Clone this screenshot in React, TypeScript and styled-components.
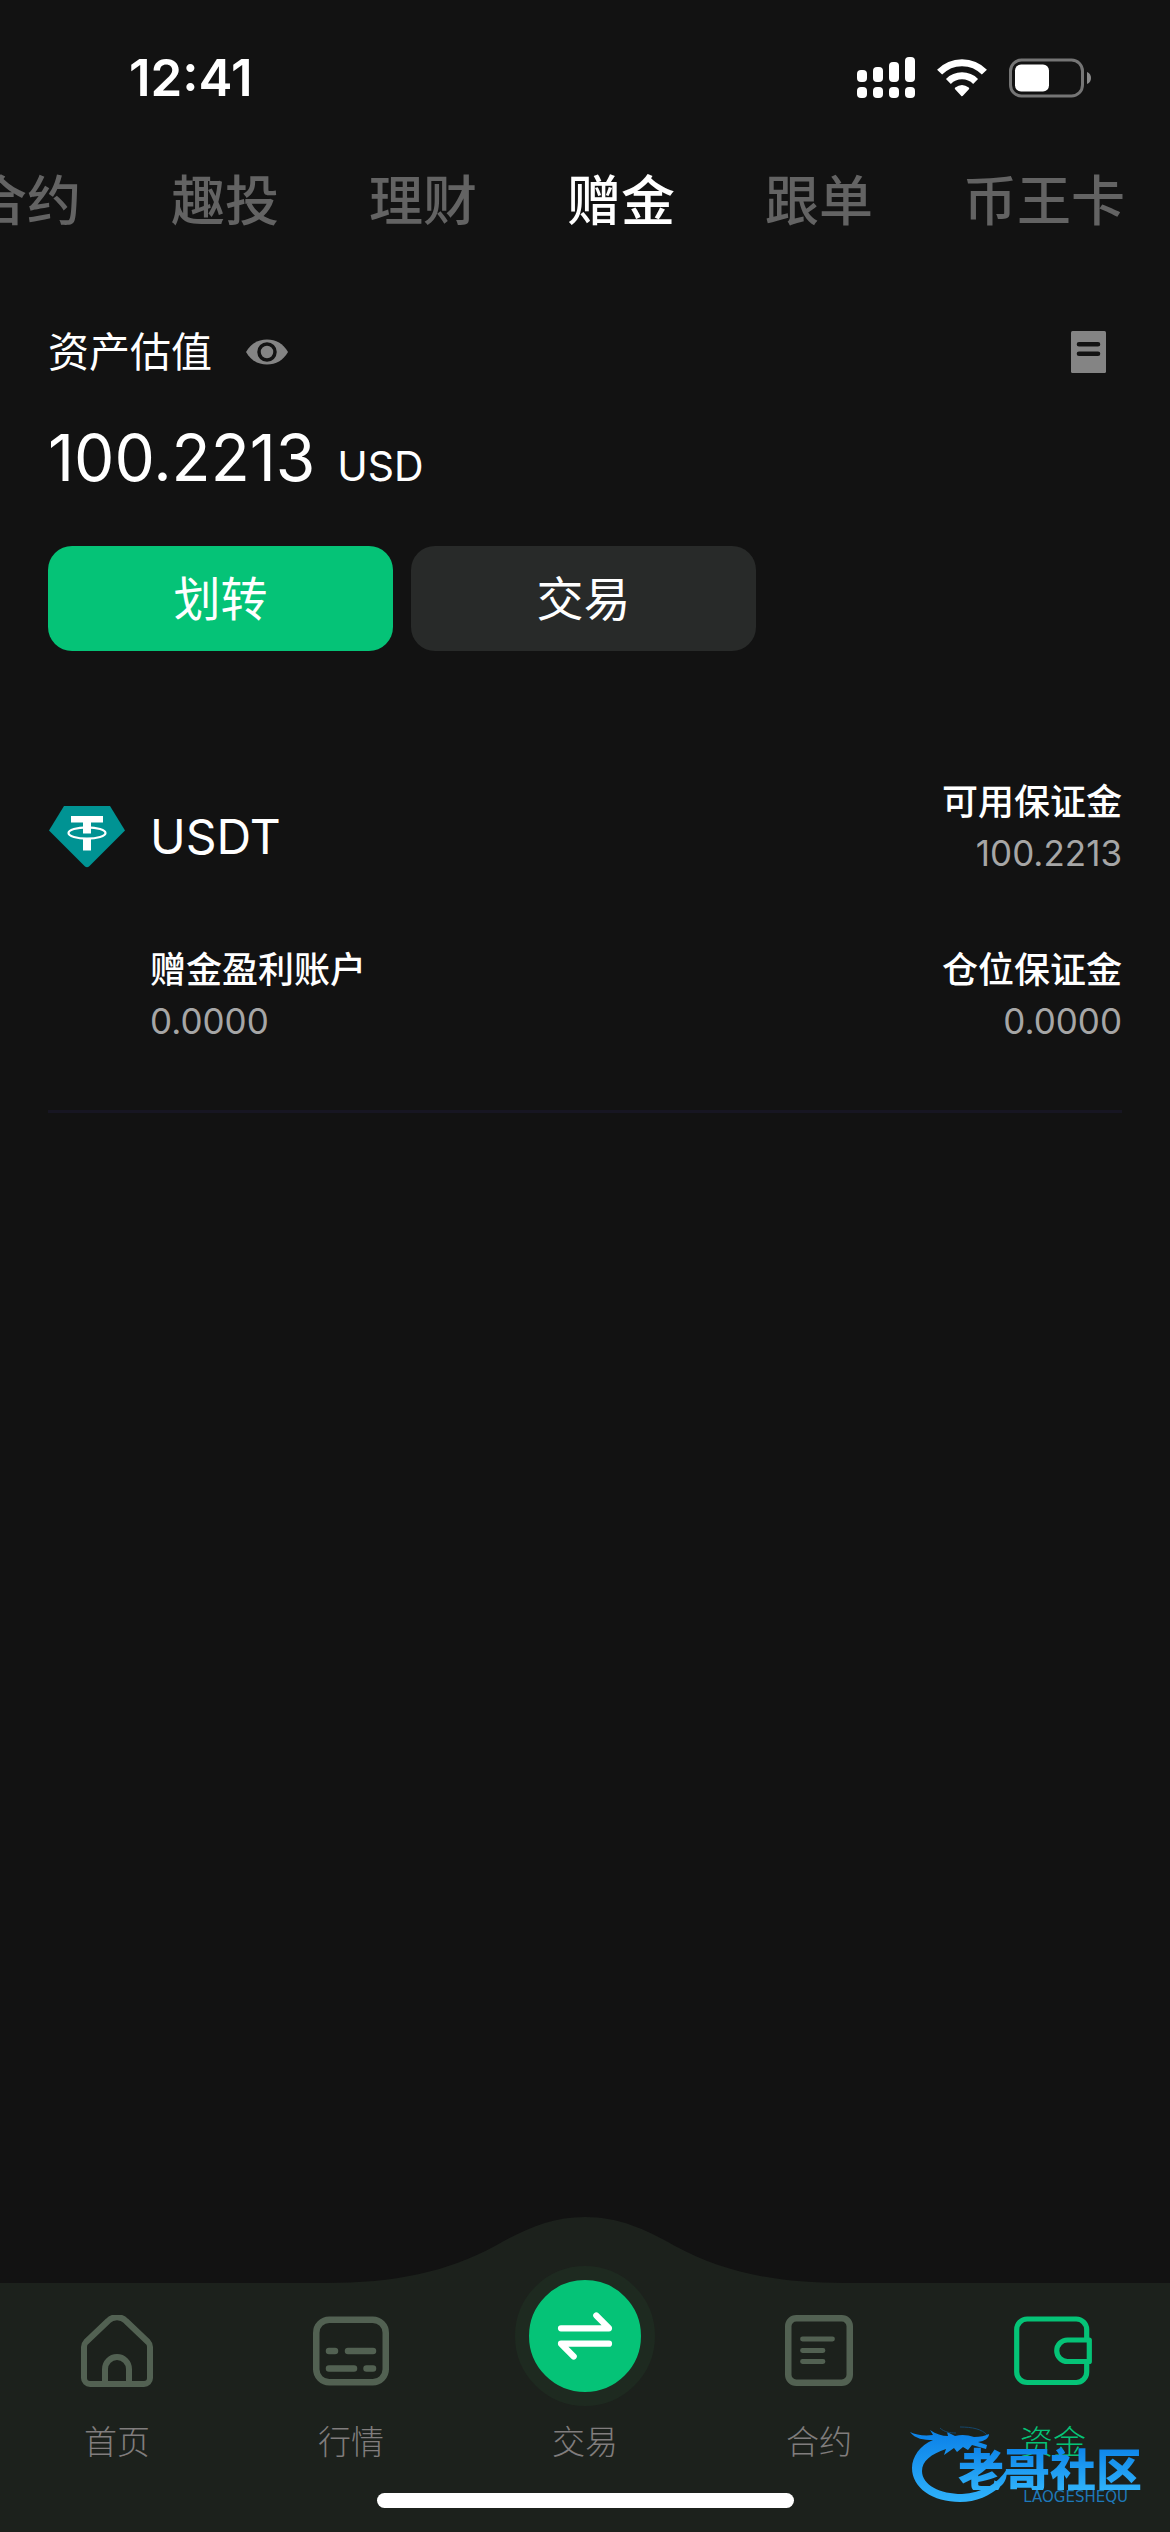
import React, { useState } from "react";
import styled, { createGlobalStyle } from "styled-components";

const color = {
  page: "#121212",
  bar: "#1c211c",
  halo: "#1e2a20",
  green: "#05c377",
  tile: "#282a29",
  text: "#ffffff",
  tab: "#636363",
  value: "#a6a6a6",
  icon: "#848484",
  navIcon: "#526152",
  navText: "#807d7d",
  line: "#171622",
};

const GlobalStyle = createGlobalStyle`
  * { box-sizing: border-box; }
  body {
    margin: 0;
    background: ${color.page};
    color: ${color.text};
    font-family: Inter, "Noto Sans CJK SC", sans-serif;
  }
  button { font-family: inherit; border: 0; padding: 0; background: none; color: inherit; cursor: pointer; }
  svg { display: block; }
`;

const Screen = styled.div`
  position: relative;
  display: flex;
  flex-direction: column;
  min-height: 100vh;
  overflow: hidden;
`;

const StatusBar = styled.header`
  display: flex;
  align-items: center;
  justify-content: space-between;
  height: 141px;
  padding: 15px 78px 0 129px;
`;

const Clock = styled.time`
  font-size: 51px;
  line-height: 60px;
  font-weight: 600;
`;

const StatusIcons = styled.div`
  display: flex;
  align-items: center;
  gap: 22px;
`;

const Tabs = styled.nav`
  display: flex;
  justify-content: flex-end;
  gap: 90px;
  padding: 21px 45px 20px;
  overflow: hidden;
`;

const Tab = styled.button<{ $active?: boolean }>`
  flex: none;
  font-size: 54px;
  line-height: 80px;
  font-weight: 500;
  color: ${(p) => (p.$active ? color.text : color.tab)};
`;

const Content = styled.main`
  flex: 1;
  padding: 0 48px;
`;

const Summary = styled.section`
  padding-top: 60px;
`;

const SummaryHead = styled.div`
  display: flex;
  align-items: center;
  justify-content: space-between;
  padding-right: 16px;
`;

const Caption = styled.div`
  display: flex;
  align-items: center;
  gap: 34px;
`;

const Title = styled.h1`
  margin: 0;
  font-size: 41px;
  line-height: 60px;
  font-weight: 400;
`;

const Total = styled.p`
  display: flex;
  align-items: baseline;
  gap: 22px;
  margin: 36px 0 0;
  font-size: 64px;
  line-height: 80px;
`;

const Unit = styled.span`
  font-size: 41px;
`;

const Actions = styled.div`
  display: flex;
  gap: 18px;
  margin-top: 40px;
`;

const Action = styled.button<{ $primary?: boolean }>`
  width: 345px;
  height: 105px;
  border-radius: 24px;
  font-size: 47px;
  line-height: 60px;
  color: ${color.text};
  background: ${(p) => (p.$primary ? color.green : color.tile)};
`;

const Asset = styled.section`
  display: grid;
  grid-template-columns: 78px 1fr auto;
  column-gap: 24px;
  row-gap: 66px;
  align-items: center;
  margin-top: 126px;
  padding-bottom: 63px;
  border-bottom: 3px solid ${color.line};
`;

const Coin = styled.h2`
  margin: 0;
  padding-top: 18px;
  font-size: 48px;
  line-height: 60px;
  font-weight: 400;
`;

const CoinIcon = styled.div`
  padding-top: 18px;
`;

const Figure = styled.dl<{ $end?: boolean }>`
  margin: 0;
  grid-column: ${(p) => (p.$end ? "3" : "2")};
  text-align: ${(p) => (p.$end ? "right" : "left")};
  font-size: 36px;
  line-height: 51px;
`;

const Label = styled.dt`
  font-weight: 500;
`;

const Value = styled.dd`
  margin: 0;
  font-size: 35px;
  color: ${color.value};
`;

const Dock = styled.footer`
  position: relative;
  padding: 29px 0 24px;
  background: ${color.bar};
`;

const Bump = styled.svg`
  position: absolute;
  left: 50%;
  bottom: 100%;
  margin-left: -260px;
`;

const DockItems = styled.nav`
  position: relative;
  display: flex;
  align-items: flex-end;
`;

const DockItem = styled.button<{ $active?: boolean }>`
  flex: 1;
  display: flex;
  flex-direction: column;
  align-items: center;
  font-size: 33px;
  line-height: 42px;
  font-weight: 300;
  color: ${(p) => (p.$active ? color.green : color.navText)};
`;

const DockIcon = styled.span<{ $active?: boolean }>`
  display: grid;
  place-items: center;
  width: 78px;
  height: 78px;
  margin-bottom: 31px;
  color: ${(p) => (p.$active ? color.green : color.navIcon)};
`;

const Swap = styled.span`
  display: grid;
  place-items: center;
  width: 140px;
  height: 140px;
  margin: -46px 0 15px;
  border: 14px solid ${color.halo};
  border-radius: 50%;
  background: ${color.green};
`;

const HomeIndicator = styled.div`
  width: 417px;
  height: 15px;
  margin: 30px auto 0;
  border-radius: 8px;
  background: #fff;
`;

const Watermark = styled.aside`
  position: absolute;
  right: 28px;
  bottom: 28px;
  display: flex;
  align-items: flex-start;
  pointer-events: none;
`;

const WatermarkText = styled.div`
  display: flex;
  flex-direction: column;
  align-items: flex-end;
  margin-left: -50px;
  padding-top: 18px;
`;

const WatermarkName = styled.strong`
  font-family: "Noto Sans CJK SC", sans-serif;
  font-size: 46px;
  line-height: 46px;
  font-weight: 900;
  background: linear-gradient(#0a80e8, #2fb2fa);
  background-clip: text;
  -webkit-background-clip: text;
  color: transparent;
`;

const WatermarkLatin = styled.small`
  padding-right: 14px;
  font-family: "DejaVu Sans", sans-serif;
  font-size: 15px;
  line-height: 14px;
  color: #1e78b8;
`;

const SignalIcon = () => (
  <svg width="58" height="42" viewBox="0 0 58 42" fill="#fff">
    <rect x="0" y="13" width="10" height="12" rx="4" />
    <rect x="16" y="10" width="10" height="15" rx="4" />
    <rect x="32" y="5" width="10" height="20" rx="4" />
    <rect x="48" y="0" width="10" height="25" rx="4" />
    {[0, 16, 32, 48].map((x) => (
      <rect key={x} x={x} y="30" width="10" height="11" rx="4" />
    ))}
  </svg>
);

const WifiIcon = () => (
  <svg width="50" height="38" viewBox="0 0 50 38" fill="none" stroke="#fff" strokeWidth="7">
    <path d="M2.6 13.2A31 31 0 0 1 47.4 13.2" />
    <path d="M11.4 22.4A19.5 19.5 0 0 1 38.6 22.4" />
    <path d="M25 36 19 29.5Q25 25 31 29.5Z" fill="#fff" strokeWidth="2.4" strokeLinejoin="round" />
  </svg>
);

const BatteryIcon = () => (
  <svg width="83" height="40" viewBox="0 0 83 40">
    <rect x="1.5" y="2" width="72" height="36" rx="11" fill="none" stroke="#757575" strokeWidth="3" />
    <path d="M78 14c3 1 4 3.500 4 6s-1 5-4 6z" fill="#8a8a8a" />
    <rect x="6" y="6.500" width="34" height="27" rx="6" fill="#fff" />
  </svg>
);

const EyeIcon = () => (
  <svg width="42" height="26" viewBox="0 0 42 26">
    <path d="M0 13C5 4.500 12 .5 21 .5S37 4.500 42 13C37 21.500 30 25.500 21 25.500S5 21.500 0 13Z" fill={color.icon} />
    <circle cx="21" cy="13" r="8" fill={color.icon} stroke={color.page} strokeWidth="3.500" />
  </svg>
);

const RecordIcon = () => (
  <svg width="35" height="42" viewBox="0 0 35 42">
    <rect width="35" height="42" rx="1.500" fill={color.icon} />
    <path d="M8 13.300H27M8 22.700H27" stroke={color.page} strokeWidth="4.600" strokeLinecap="round" />
  </svg>
);

const TetherIcon = () => (
  <svg width="78" height="62" viewBox="-1 0 78 62">
    <path d="M15 0H61L76 24.500 40 60.500Q38 62 36 60.500L0 24.500Z" fill="#009393" />
    <path d="M22 10H54V16.500H42V27.500H34V16.500H22ZM34 32.500H42V44.500H34Z" fill="#fff" />
    <ellipse cx="38" cy="27" rx="18.500" ry="5.600" fill="none" stroke="#fff" strokeWidth="2.200" />
  </svg>
);

const HomeIcon = () => (
  <svg width="72" height="72" viewBox="0 0 72 72" fill="none" stroke="currentColor" strokeWidth="6">
    <path d="M9 69H63a6 6 0 0 0 6-6V32q0-3-2-5L45 6a12.500 12.500 0 0 0-18 0L5 27q-2 2-2 5V63a6 6 0 0 0 6 6Z" />
    <path d="M24 68V54a12 12 0 0 1 24 0V68" />
  </svg>
);

const MarketIcon = () => (
  <svg width="76" height="70" viewBox="0 0 76 70" fill="none" stroke="currentColor" strokeWidth="6.500" strokeLinecap="round">
    <rect x="3.250" y="3.750" width="69.500" height="62.500" rx="13" />
    <path d="M16 35H22M35 35H60M16 52.500H41M53.500 52.500H60" />
  </svg>
);

const ContractIcon = () => (
  <svg width="68" height="72" viewBox="0 0 68 72" fill="none" stroke="currentColor" strokeLinecap="round">
    <rect x="3.250" y="3.250" width="61.500" height="64.500" rx="8" strokeWidth="6.500" />
    <path d="M17.500 24H47.500M17.500 35.500H38M17.500 46.500H38" strokeWidth="4.800" />
  </svg>
);

const WalletIcon = () => (
  <svg width="78" height="70" viewBox="0 0 78 70" fill="none" stroke="currentColor" strokeWidth="5.200" strokeLinejoin="round">
    <path d="M72.700 23V13.500a10.500 10.500 0 0 0-10.500-10.500H13.200A10.500 10.500 0 0 0 2.700 13.500V56a10.500 10.500 0 0 0 10.500 10.500H62.200A10.500 10.500 0 0 0 72.700 56V46" />
    <path d="M75.300 24H53.500a10.700 10.700 0 0 0 0 21.500H75.300Z" />
  </svg>
);

const SwapIcon = () => (
  <svg width="56" height="50" viewBox="-28 -25 56 50" fill="none" stroke="#fff" strokeWidth="6.200" strokeLinecap="round" strokeLinejoin="round">
    <path d="M-24-7.700H24L11.300-20.500M24 7.700H-24L-11.300 20.500" />
  </svg>
);

const DragonIcon = () => (
  <svg width="98" height="76" viewBox="0 0 98 76">
    <defs>
      <linearGradient id="dragon" x1="0" y1="0" x2="0" y2="1">
        <stop offset="0" stopColor="#0a80e8" />
        <stop offset="1" stopColor="#2fb2fa" />
      </linearGradient>
    </defs>
    <path
      fill="url(#dragon)"
      d="M0 6C6 9 14 10 23 9L20 4C26 8 32 10 38 10L37 6 45 10C52 8 58 9 64 11 70 11 75 10 79 8 79 12 75 15 68 16L77 19 76 23 62 19 58 24 53 21 47 26 44 22 34 29 36 23C21 28 12 35 12 45 12 59 30 68 52 68 72 67 88 58 97 43 97 50 96 55 92 59 80 70 66 76 50 76 23 76 2 62 2 42 2 31 10 19 23 14 14 14 5 13 0 6Z"
    />
    <path d="M30 2C34 6 40 7 46 7M50 1C62 1 72 3 77 9" fill="none" stroke="#14466b" strokeWidth="1" />
  </svg>
);

const tabs = ["合约", "趣投", "理财", "赠金", "跟单", "币王卡"];

export default function App() {
  const [tab, setTab] = useState("赠金");

  return (
    <>
      <GlobalStyle />
      <Screen>
        <StatusBar>
          <Clock>12:41</Clock>
          <StatusIcons>
            <SignalIcon />
            <WifiIcon />
            <BatteryIcon />
          </StatusIcons>
        </StatusBar>

        <Tabs>
          {tabs.map((name) => (
            <Tab key={name} $active={name === tab} onClick={() => setTab(name)}>
              {name}
            </Tab>
          ))}
        </Tabs>

        <Content>
          <Summary>
            <SummaryHead>
              <Caption>
                <Title>资产估值</Title>
                <button aria-label="显示或隐藏资产"><EyeIcon /></button>
              </Caption>
              <button aria-label="资金记录"><RecordIcon /></button>
            </SummaryHead>
            <Total>
              100.2213 <Unit>USD</Unit>
            </Total>
            <Actions>
              <Action $primary>划转</Action>
              <Action>交易</Action>
            </Actions>
          </Summary>

          <Asset>
            <CoinIcon><TetherIcon /></CoinIcon>
            <Coin>USDT</Coin>
            <Figure $end>
              <Label>可用保证金</Label>
              <Value>100.2213</Value>
            </Figure>
            <Figure>
              <Label>赠金盈利账户</Label>
              <Value>0.0000</Value>
            </Figure>
            <Figure $end>
              <Label>仓位保证金</Label>
              <Value>0.0000</Value>
            </Figure>
          </Asset>
        </Content>

        <Dock>
          <Bump width="520" height="66" viewBox="0 0 520 66" fill={color.bar}>
            <path d="M0 66C70 66 122 55 170 29 200 12 226 0 260 0S320 12 350 29C398 55 450 66 520 66Z" />
          </Bump>
          <DockItems>
            <DockItem>
              <DockIcon><HomeIcon /></DockIcon>
              首页
            </DockItem>
            <DockItem>
              <DockIcon><MarketIcon /></DockIcon>
              行情
            </DockItem>
            <DockItem>
              <Swap><SwapIcon /></Swap>
              交易
            </DockItem>
            <DockItem>
              <DockIcon><ContractIcon /></DockIcon>
              合约
            </DockItem>
            <DockItem $active>
              <DockIcon $active><WalletIcon /></DockIcon>
              资金
            </DockItem>
          </DockItems>
          <HomeIndicator />
        </Dock>

        <Watermark>
          <DragonIcon />
          <WatermarkText>
            <WatermarkName>老哥社区</WatermarkName>
            <WatermarkLatin>LAOGESHEQU</WatermarkLatin>
          </WatermarkText>
        </Watermark>
      </Screen>
    </>
  );
}
